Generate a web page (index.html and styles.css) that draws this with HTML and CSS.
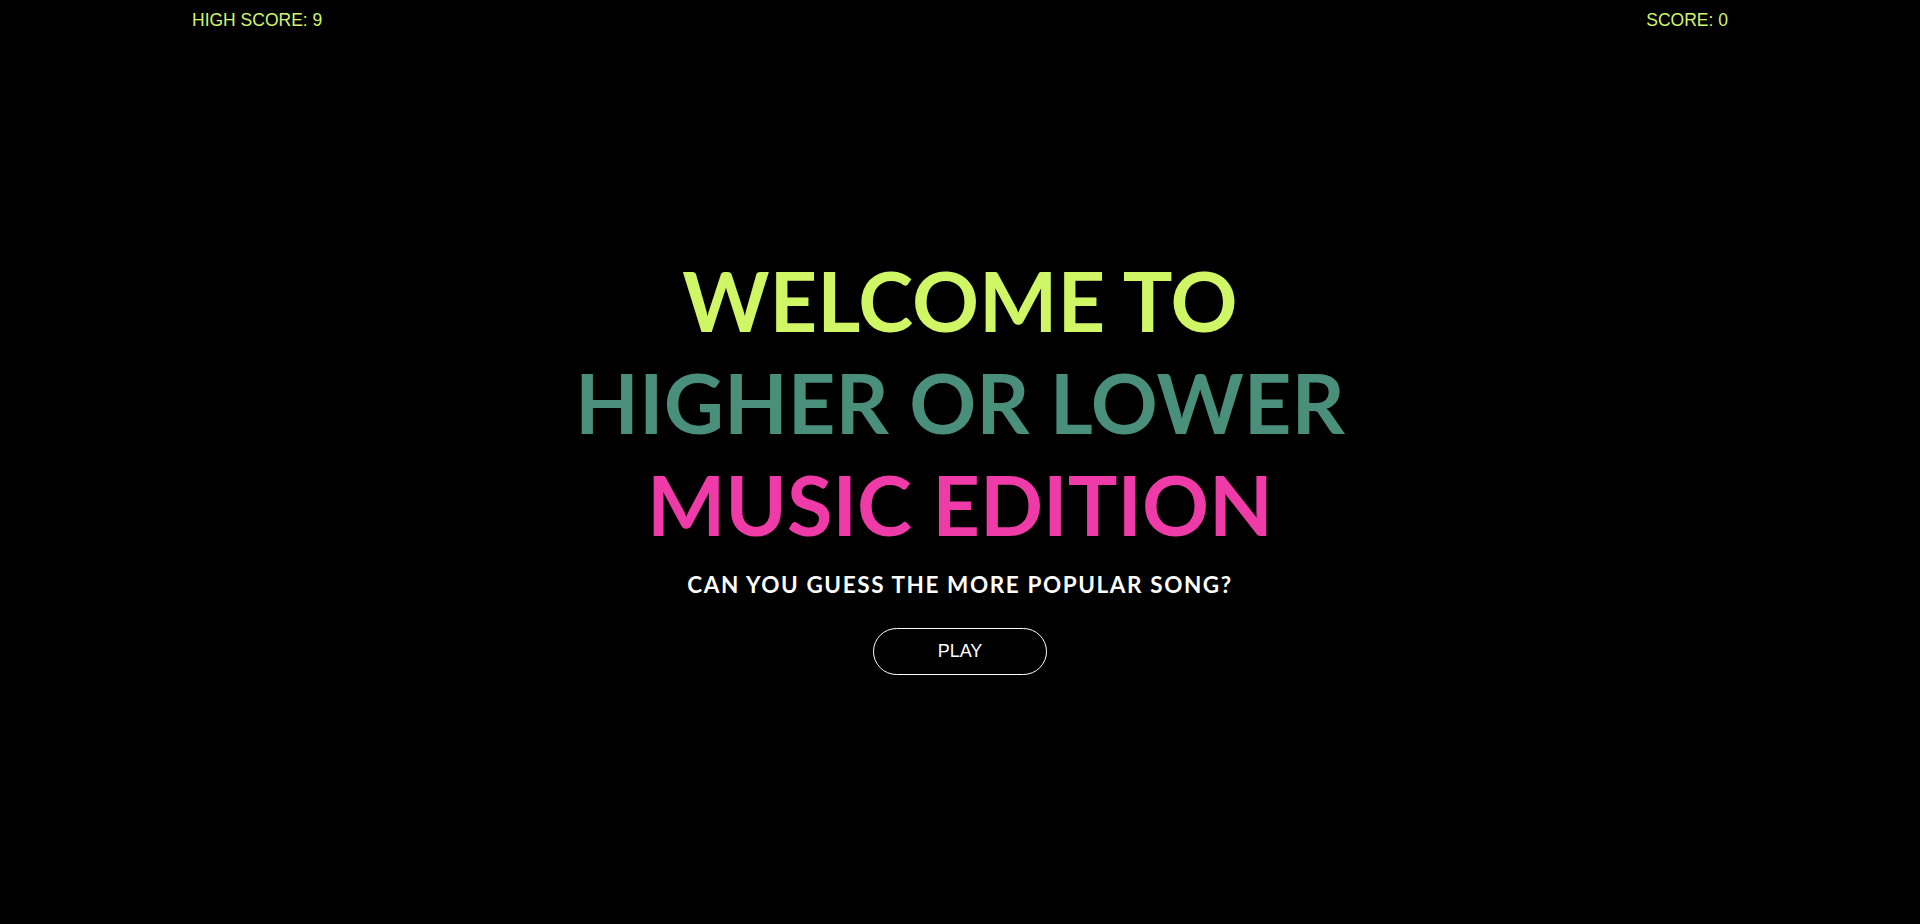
FILE: index.html
```html
<!DOCTYPE html>
<html lang="en">
<head>
<meta charset="utf-8">
<title>Higher or Lower - Music Edition</title>
<link rel="stylesheet" href="styles.css">
</head>
<body>
<div class="page">
  <header class="scorebar">
    <span class="score">HIGH SCORE: 9</span>
    <span class="score">SCORE: 0</span>
  </header>
  <main class="welcome">
    <h1 class="title">
      <span class="line line-lime">WELCOME TO</span>
      <span class="line line-teal">HIGHER OR LOWER</span>
      <span class="line line-pink">MUSIC EDITION</span>
    </h1>
    <p class="tagline">CAN YOU GUESS THE MORE POPULAR SONG?</p>
    <button class="play-btn" type="button">PLAY</button>
  </main>
</div>
</body>
</html>
```
FILE: styles.css
```css
html, body {
  margin: 0;
  padding: 0;
  background: #000;
}

.page {
  min-height: 100vh;
  display: flex;
  flex-direction: column;
}

.scorebar {
  width: 80%;
  margin: 0 auto;
  padding-top: 10px;
  height: 30px;
  box-sizing: border-box;
  display: flex;
  justify-content: space-between;
  align-items: flex-start;
}

.score {
  font-family: "Liberation Sans", Arial, sans-serif;
  font-size: 17.5px;
  color: #d3f56c;
}

.welcome {
  flex: 1;
  display: flex;
  flex-direction: column;
  align-items: center;
  justify-content: center;
  padding-bottom: 30px;
}

.title {
  margin: 0;
  display: flex;
  flex-direction: column;
  align-items: center;
  font-family: Lato, "Open Sans", sans-serif;
  font-weight: 700;
  font-size: 83px;
  line-height: 102px;
  letter-spacing: 0;
}

.line-lime { color: #cff665; }
.line-teal { color: #4a8f7a; }
.line-pink { color: #ef3ba8; }

.tagline {
  margin: 16px 0 0;
  font-family: Lato, "Open Sans", sans-serif;
  font-weight: 700;
  font-size: 22.5px;
  letter-spacing: 1.6px;
  color: #fff;
}

.play-btn {
  margin-top: 30px;
  width: 174px;
  height: 47px;
  border: 1px solid #fff;
  border-radius: 24px;
  background: transparent;
  color: #fff;
  font-family: "Liberation Sans", Arial, sans-serif;
  font-size: 18px;
  cursor: pointer;
}
```
